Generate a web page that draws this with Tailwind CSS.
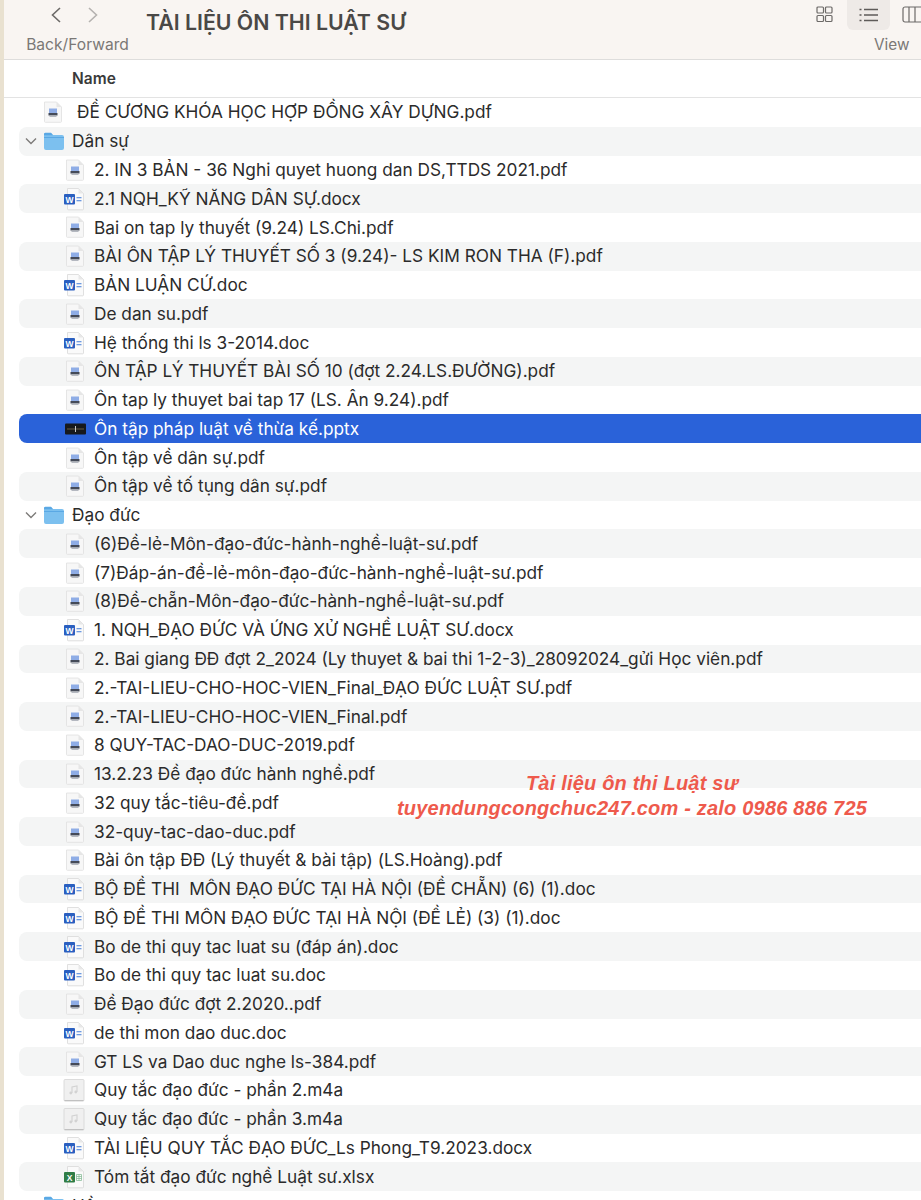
<!DOCTYPE html>
<html>
<head>
<meta charset="utf-8">
<script src="https://cdn.jsdelivr.net/npm/@tailwindcss/browser@4"></script>
</head>
<body class="bg-white overflow-hidden">
<svg class="hidden">
  <symbol id="pdf" viewBox="0 0 20 24">
    <path d="M1.500 2h12l5 5v14.500a.8.8 0 0 1-.8.8H2.300a.8.8 0 0 1-.8-.8z" fill="#f7f7f7" stroke="#e0e0e0" stroke-width=".8"/>
    <path d="M13.500 2v5h5z" fill="#e6e6e6"/>
    <rect x="6" y="8.500" width="8" height="4.500" fill="#8fadE6"/>
    <rect x="5.500" y="13" width="9" height="2.500" fill="#444a58"/>
    <rect x="6.500" y="15.500" width="7" height="1.500" fill="#b4b8c0"/>
  </symbol>
  <symbol id="word" viewBox="0 0 22 24">
    <path d="M4.500 1.500h11l5 5v15.500a.8.8 0 0 1-.8.8H5.300a.8.8 0 0 1-.8-.8z" fill="#fafafa" stroke="#d8d8d8" stroke-width=".8"/>
    <path d="M15.500 1.500v5h5z" fill="#e8e8e8"/>
    <rect x="1" y="7" width="11" height="10.500" rx="1" fill="#2a5fc0"/>
    <text x="6.500" y="15.500" font-size="8.500" font-weight="700" fill="#fff" text-anchor="middle" font-family="Liberation Sans">W</text>
    <rect x="13.500" y="10" width="5" height="1.300" fill="#6e9ae0"/>
    <rect x="13.500" y="13" width="5" height="1.300" fill="#6e9ae0"/>
  </symbol>
  <symbol id="excel" viewBox="0 0 22 24">
    <path d="M4.500 1.500h11l5 5v15.500a.8.8 0 0 1-.8.8H5.300a.8.8 0 0 1-.8-.8z" fill="#fafafa" stroke="#d8d8d8" stroke-width=".8"/>
    <path d="M15.500 1.500v5h5z" fill="#e8e8e8"/>
    <rect x="1" y="7" width="11" height="10.500" rx="1" fill="#2f7d46"/>
    <text x="6.500" y="15.500" font-size="8.500" font-weight="700" fill="#fff" text-anchor="middle" font-family="Liberation Sans">X</text>
    <path d="M13.500 9.500h5v6h-5zM13.500 11.500h5M13.500 13.500h5M16 9.500v6" fill="none" stroke="#7bb68e" stroke-width=".7"/>
  </symbol>
  <symbol id="audio" viewBox="0 0 22 24">
    <path d="M2 1.500h18a1 1 0 0 1 1 1v19.500a1 1 0 0 1-1 1H2a1 1 0 0 1-1-1V2.500a1 1 0 0 1 1-1z" fill="#f0f0f0" stroke="#d4d4d4" stroke-width=".8"/>
    <path d="M1.500 22.600h19" stroke="#bdbdbd" stroke-width="1"/>
    <path d="M9 15V9l5-1v6" fill="none" stroke="#d2d2d2" stroke-width="1.100"/>
    <circle cx="7.800" cy="15" r="1.400" fill="#d2d2d2"/>
    <circle cx="12.800" cy="14" r="1.400" fill="#d2d2d2"/>
  </symbol>
  <symbol id="pptx" viewBox="0 0 21 12">
    <rect x="0" y="0.500" width="21" height="11" rx="1" fill="#17191c"/>
    <path d="M2 6h17" stroke="#8a7a55" stroke-width=".7"/>
    <path d="M10.500 3v6" stroke="#c8c8c8" stroke-width="1"/>
  </symbol>
  <symbol id="folder" viewBox="0 0 22 20">
    <path d="M1 4a2 2 0 0 1 2-2h5l2 2h9a2 2 0 0 1 2 2v11a2 2 0 0 1-2 2H3a2 2 0 0 1-2-2z" fill="#7cc0ef"/>
    <path d="M1 6.500h20" stroke="#5aa8e4" stroke-width="1"/>
    <path d="M1 2.800a1.500 1.500 0 0 1 1.500-1h5.500l2 2.500H1z" fill="#5aa8e4"/>
  </symbol>
</svg>

<div class="relative flex h-[1200px] overflow-hidden font-['Inter','Liberation_Sans',sans-serif]">
  <div class="w-1 shrink-0 bg-[#e9e1d0]"></div>
  <div class="flex-1 min-w-0">
    <header class="h-[60px] bg-[#f9f5f2] border-b border-[#dedddc]">
      <div class="flex items-start">
        <div class="w-[142px] shrink-0 flex flex-col items-center pl-[5px]">
          <div class="flex gap-[23px] mt-[6px] h-[21px] mr-[6px]">
            <svg class="w-[14px] h-[18px]" viewBox="0 0 14 18" fill="none" stroke="#6d6a68" stroke-width="1.600"><path d="M11 2 3.500 9 11 16"/></svg>
            <svg class="w-[14px] h-[18px]" viewBox="0 0 14 18" fill="none" stroke="#b5b2b0" stroke-width="1.600"><path d="M3 2l7.500 7L3 16"/></svg>
          </div>
          <div class="mt-[8px] text-[15.600px] leading-[20px] text-[#7b7876] whitespace-nowrap">Back/Forward</div>
        </div>
        <h1 class="mt-[8px] text-[21.300px] leading-[28px] font-semibold text-[#4a4846]">TÀI LIỆU ÔN THI LUẬT SƯ</h1>
        <div class="ml-auto w-[109px] shrink-0 flex flex-col">
          <div class="flex items-center h-[30px]">
            <svg class="w-[17px] h-[17px] ml-[4px] mt-[-2px]" viewBox="0 0 17 17" fill="none" stroke="#6d6a68" stroke-width="1.200"><rect x="1" y="1" width="6.500" height="6" rx="1"/><rect x="9.500" y="1" width="6.500" height="6" rx="1"/><rect x="1" y="9.500" width="6.500" height="6" rx="1"/><rect x="9.500" y="9.500" width="6.500" height="6" rx="1"/></svg>
            <div class="ml-[14px] w-[43px] h-[30px] rounded-b-md bg-[#eeeae7] flex items-center justify-center">
              <svg class="w-[19px] h-[14px]" viewBox="0 0 19 14" fill="none" stroke="#5e5b59" stroke-width="1.400"><path d="M5 1.500h14M5 7h14M5 12.500h14M.5 1.500h2M.5 7h2M.5 12.500h2"/></svg>
            </div>
            <svg class="w-[19px] h-[17px] ml-[12px] mt-[-2px]" viewBox="0 0 19 17" fill="none" stroke="#6d6a68" stroke-width="1.200"><rect x="1" y="1" width="22" height="15" rx="2"/><path d="M7 1v15M13 1v15"/></svg>
          </div>
          <div class="mt-[5px] pl-[62px] text-[15.300px] leading-[20px] text-[#7b7876]">View</div>
        </div>
      </div>
    </header>
    <div class="h-[38px] border-b border-[#e3e3e3] pl-[68px] flex items-center text-[15.500px] font-semibold text-[#3a3a3a]">Name</div>
    <div id="fileList"></div>
  </div>

  <div class="absolute left-[395px] top-[770px] w-[474px] text-center font-['Liberation_Sans',sans-serif] italic font-bold text-[20px] leading-[26px] text-[#ee5a4c] tracking-[0.200px]">
    <div>Tài liệu ôn thi Luật sư</div>
    <div class="mt-[-1px] whitespace-nowrap">tuyendungcongchuc247.com - zalo 0986 886 725</div>
  </div>
</div>

<script>
  // [name, icon] - rows alternate white / light gray like Finder's list view
  const files = [
    ['ĐỀ CƯƠNG KHÓA HỌC HỢP ĐỒNG XÂY DỰNG.pdf', 'top'],
    ['Dân sự', 'folder'],
    ['2. IN 3 BẢN - 36 Nghi quyet huong dan DS,TTDS 2021.pdf', 'pdf'],
    ['2.1 NQH_KỸ NĂNG DÂN SỰ.docx', 'word'],
    ['Bai on tap ly thuyết (9.24) LS.Chi.pdf', 'pdf'],
    ['BÀI ÔN TẬP LÝ THUYẾT SỐ 3 (9.24)- LS KIM RON THA (F).pdf', 'pdf'],
    ['BẢN LUẬN CỨ.doc', 'word'],
    ['De dan su.pdf', 'pdf'],
    ['Hệ thống thi ls 3-2014.doc', 'word'],
    ['ÔN TẬP LÝ THUYẾT BÀI SỐ 10 (đợt 2.24.LS.ĐƯỜNG).pdf', 'pdf'],
    ['Ôn tap ly thuyet bai tap 17 (LS. Ân 9.24).pdf', 'pdf'],
    ['Ôn tập pháp luật về thừa kế.pptx', 'pptx'],
    ['Ôn tập về dân sự.pdf', 'pdf'],
    ['Ôn tập về tố tụng dân sự.pdf', 'pdf'],
    ['Đạo đức', 'folder'],
    ['(6)Đề-lẻ-Môn-đạo-đức-hành-nghề-luật-sư.pdf', 'pdf'],
    ['(7)Đáp-án-đề-lẻ-môn-đạo-đức-hành-nghề-luật-sư.pdf', 'pdf'],
    ['(8)Đề-chẵn-Môn-đạo-đức-hành-nghề-luật-sư.pdf', 'pdf'],
    ['1. NQH_ĐẠO ĐỨC VÀ ỨNG XỬ NGHỀ LUẬT SƯ.docx', 'word'],
    ['2. Bai giang ĐĐ đợt 2_2024 (Ly thuyet & bai thi 1-2-3)_28092024_gửi Học viên.pdf', 'pdf'],
    ['2.-TAI-LIEU-CHO-HOC-VIEN_Final_ĐẠO ĐỨC LUẬT SƯ.pdf', 'pdf'],
    ['2.-TAI-LIEU-CHO-HOC-VIEN_Final.pdf', 'pdf'],
    ['8 QUY-TAC-DAO-DUC-2019.pdf', 'pdf'],
    ['13.2.23 Đề đạo đức hành nghề.pdf', 'pdf'],
    ['32 quy tắc-tiêu-đề.pdf', 'pdf'],
    ['32-quy-tac-dao-duc.pdf', 'pdf'],
    ['Bài ôn tập ĐĐ (Lý thuyết & bài tập) (LS.Hoàng).pdf', 'pdf'],
    ['BỘ ĐỀ THI  MÔN ĐẠO ĐỨC TẠI HÀ NỘI (ĐỀ CHẴN) (6) (1).doc', 'word'],
    ['BỘ ĐỀ THI MÔN ĐẠO ĐỨC TẠI HÀ NỘI (ĐỀ LẺ) (3) (1).doc', 'word'],
    ['Bo de thi quy tac luat su (đáp án).doc', 'word'],
    ['Bo de thi quy tac luat su.doc', 'word'],
    ['Đề Đạo đức đợt 2.2020..pdf', 'pdf'],
    ['de thi mon dao duc.doc', 'word'],
    ['GT LS va Dao duc nghe ls-384.pdf', 'pdf'],
    ['Quy tắc đạo đức - phần 2.m4a', 'audio'],
    ['Quy tắc đạo đức - phần 3.m4a', 'audio'],
    ['TÀI LIỆU QUY TẮC ĐẠO ĐỨC_Ls Phong_T9.2023.docx', 'word'],
    ['Tóm tắt đạo đức nghề Luật sư.xlsx', 'excel'],
    ['Hồ sơ', 'folder'],
  ];

  const fileList = document.getElementById('fileList');

  function renderIcon(icon) {
    if (icon === 'pptx') return '<svg class="w-[21px] h-[12px] ml-[46px] mr-[8px] shrink-0"><use href="#pptx"/></svg>';
    if (icon === 'pdf') return '<svg class="w-[20px] h-[24px] ml-[46px] mr-[9px] shrink-0"><use href="#pdf"/></svg>';
    if (icon === 'top') return '<svg class="w-[20px] h-[24px] ml-[24px] mr-[14px] shrink-0"><use href="#pdf"/></svg>';
    if (icon === 'folder') {
      return '<svg class="w-[12px] h-[8px] ml-[6px] mr-[6px] shrink-0" viewBox="0 0 12 8" fill="none" stroke="#7d7b79" stroke-width="1.400"><path d="M1 1.500 6 6.500 11 1.500"/></svg>'
        + '<svg class="w-[22px] h-[20px] shrink-0 mr-[7px]"><use href="#folder"/></svg>';
    }
    return '<svg class="w-[22px] h-[24px] ml-[44px] mr-[9px] shrink-0"><use href="#' + icon + '"/></svg>';
  }

  files.forEach(([name, icon], i) => {
    const row = document.createElement('div');
    let cls = 'flex items-center h-[28.780px] ml-[15px] text-[17.250px] whitespace-pre rounded-l-lg';
    if (icon === 'pptx') cls += ' bg-[#2a62d9] text-white';
    else if (i % 2 === 1) cls += ' bg-[#f4f5f5] text-[#2b2b2b]';
    else cls += ' text-[#2b2b2b]';
    row.className = cls;
    row.innerHTML = renderIcon(icon) + '<span></span>';
    row.lastChild.textContent = name;
    fileList.appendChild(row);
  });
</script>
</body>
</html>
